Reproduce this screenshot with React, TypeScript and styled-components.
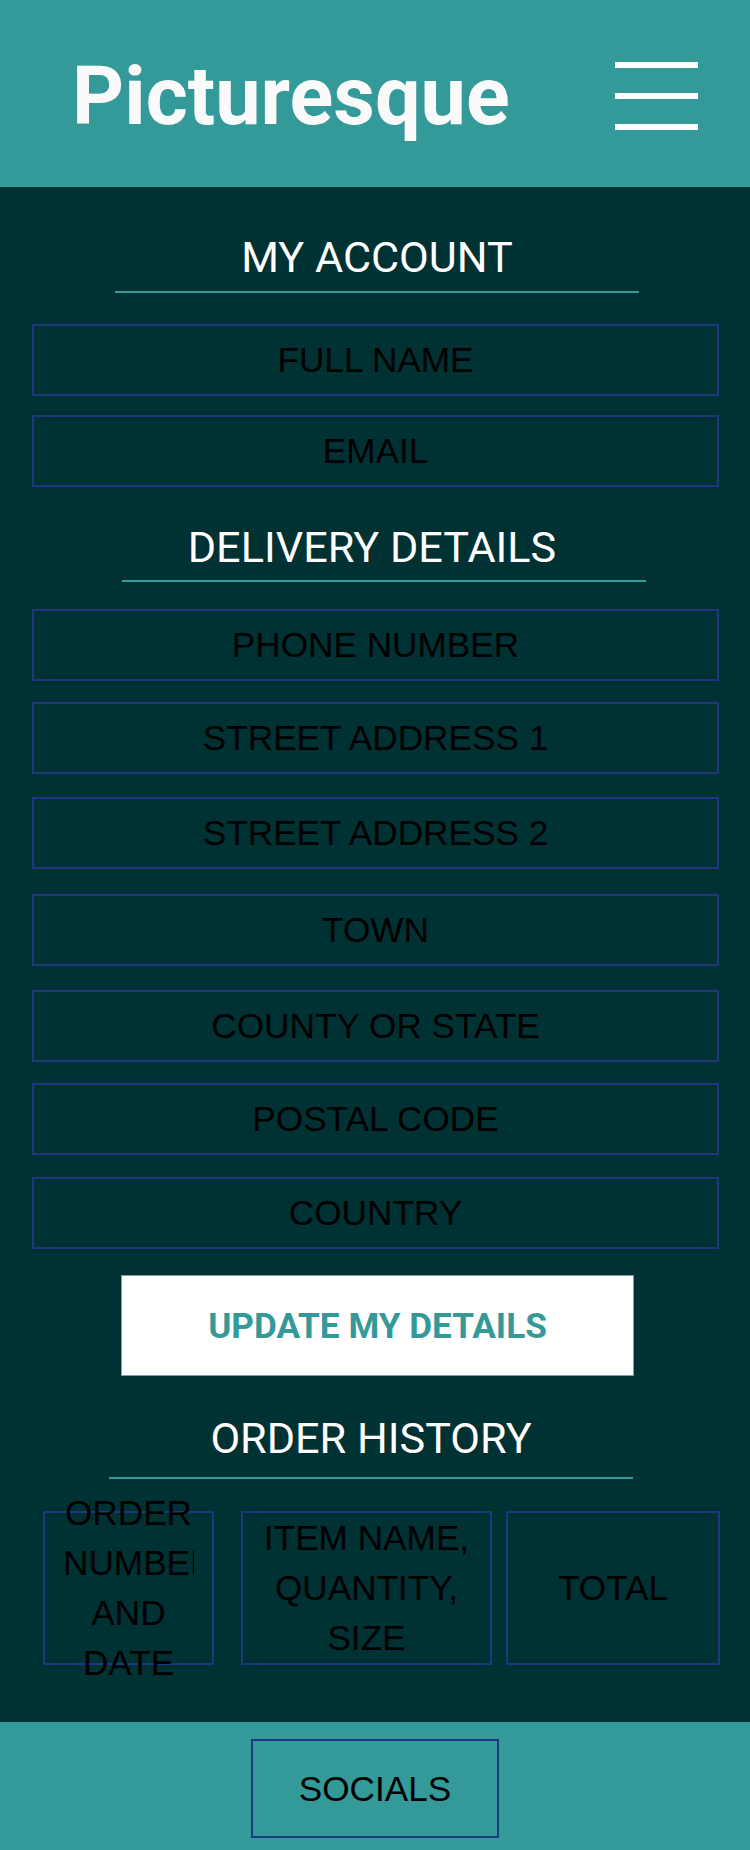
import styled, {createGlobalStyle} from "styled-components";

const GlobalStyle = createGlobalStyle`
  body {
    margin: 0;
    background: #003133;
    font-family: "Liberation Sans", Arial, sans-serif;
  }
  * {
    box-sizing: border-box;
  }
`;

const fieldsTop = [
    {label: "FULL NAME", gap: 31},
    {label: "EMAIL", gap: 19},
];

const fieldsDelivery = [
    {label: "PHONE NUMBER", gap: 27},
    {label: "STREET ADDRESS 1", gap: 21},
    {label: "STREET ADDRESS 2", gap: 23},
    {label: "TOWN", gap: 25},
    {label: "COUNTY OR STATE", gap: 24},
    {label: "POSTAL CODE", gap: 21},
    {label: "COUNTRY", gap: 22},
];

const orderCells = [
    {text: "ORDER NUMBER AND DATE", width: 171, left: 43},
    {text: "ITEM NAME, QUANTITY, SIZE", width: 251, left: 27},
    {text: "TOTAL", width: 214, left: 14},
];

function App() {
    return (
        <Page>
            <GlobalStyle/>
            <Header>
                <Logo>Picturesque</Logo>
                <Burger aria-label="menu">
                    <Bar/>
                    <Bar/>
                    <Bar/>
                </Burger>
            </Header>

            <Main>
                <SectionTitle $top={46} $left={115} $pad={8}>MY ACCOUNT</SectionTitle>
                {fieldsTop.map(f => (
                    <Field key={f.label} $gap={f.gap} placeholder={f.label}/>
                ))}

                <SectionTitle $top={36} $left={122} $pad={7} $shift={24}>DELIVERY DETAILS</SectionTitle>
                {fieldsDelivery.map(f => (
                    <Field key={f.label} $gap={f.gap} placeholder={f.label}/>
                ))}

                <UpdateButton>UPDATE MY DETAILS</UpdateButton>

                <SectionTitle $top={38} $left={109} $pad={13}>ORDER HISTORY</SectionTitle>
                <OrderRow>
                    {orderCells.map(c => (
                        <OrderCell key={c.text} $w={c.width} $ml={c.left}>
                            <CellText>{c.text}</CellText>
                        </OrderCell>
                    ))}
                </OrderRow>
            </Main>

            <Footer>
                <SocialsBox>SOCIALS</SocialsBox>
            </Footer>
        </Page>
    );
}

export default App;

const Page = styled.div`
  display: flex;
  flex-direction: column;
  width: 750px;
  min-height: 1850px;
`;

const Header = styled.header`
  display: flex;
  align-items: center;
  justify-content: space-between;
  height: 187px;
  padding: 0 52px 0 72px;
  background: #349999;
`;

const Logo = styled.h1`
  margin: 0;
  padding-top: 6px;
  font-family: Roboto, "Liberation Sans", sans-serif;
  font-weight: 700;
  font-size: 81px;
  line-height: 80px;
  color: #fbfafa;
`;

const Burger = styled.div`
  display: flex;
  flex-direction: column;
  gap: 25px;
  padding-top: 4px;
`;

const Bar = styled.span`
  display: block;
  width: 83px;
  height: 6px;
  background: #ffffff;
`;

const Main = styled.main`
  display: flex;
  flex-direction: column;
  padding-bottom: 57px;
  background: #003133;
`;

type TitleProps = {
    $top: number;
    $left: number;
    $pad: number;
    $shift?: number;
};

const SectionTitle = styled.h2<TitleProps>`
  width: 524px;
  margin: ${({$top}) => $top}px 0 0 ${({$left}) => $left}px;
  padding: 0 ${({$shift}) => $shift ?? 0}px ${({$pad}) => $pad}px 0;
  border-bottom: 2px solid #349999;
  font-family: Roboto, "Liberation Sans", sans-serif;
  font-weight: 400;
  font-size: 43.2px;
  line-height: 50px;
  text-align: center;
  color: #ffffff;
`;

const Field = styled.input<{ $gap: number }>`
  display: block;
  width: 687px;
  height: 72px;
  margin: ${({$gap}) => $gap}px 0 0 32px;
  padding: 0;
  border: 2px solid #1f3781;
  background: transparent;
  font-family: "Liberation Sans", Arial, sans-serif;
  font-size: 35.2px;
  text-align: center;
  color: #000000;
  outline: none;

  &::placeholder {
    color: #000000;
    opacity: 1;
  }
`;

const UpdateButton = styled.button`
  width: 513px;
  height: 101px;
  margin: 26px 0 0 121px;
  padding: 0;
  border: 1px solid #7b9ea0;
  background: #ffffff;
  font-family: Roboto, "Liberation Sans", sans-serif;
  font-weight: 700;
  font-size: 35.2px;
  color: #349999;
  cursor: pointer;
`;

const OrderRow = styled.div`
  display: flex;
  margin-top: 32px;
`;

const OrderCell = styled.div<{ $w: number; $ml: number }>`
  display: flex;
  align-items: center;
  justify-content: center;
  width: ${({$w}) => $w}px;
  height: 154px;
  margin-left: ${({$ml}) => $ml}px;
  padding: 0 18px;
  border: 2px solid #1f3781;
`;

const CellText = styled.p`
  width: 100%;
  margin: 0;
  overflow-x: clip;
  font-family: "Liberation Sans", Arial, sans-serif;
  font-size: 35.2px;
  line-height: 50px;
  text-align: center;
  color: #000000;
`;

const Footer = styled.footer`
  display: flex;
  justify-content: center;
  padding: 17px 0 12px;
  background: #349999;
`;

const SocialsBox = styled.div`
  display: flex;
  align-items: center;
  justify-content: center;
  width: 248px;
  height: 99px;
  border: 2px solid #1f3781;
  font-family: "Liberation Sans", Arial, sans-serif;
  font-size: 35.2px;
  color: #000000;
`;
